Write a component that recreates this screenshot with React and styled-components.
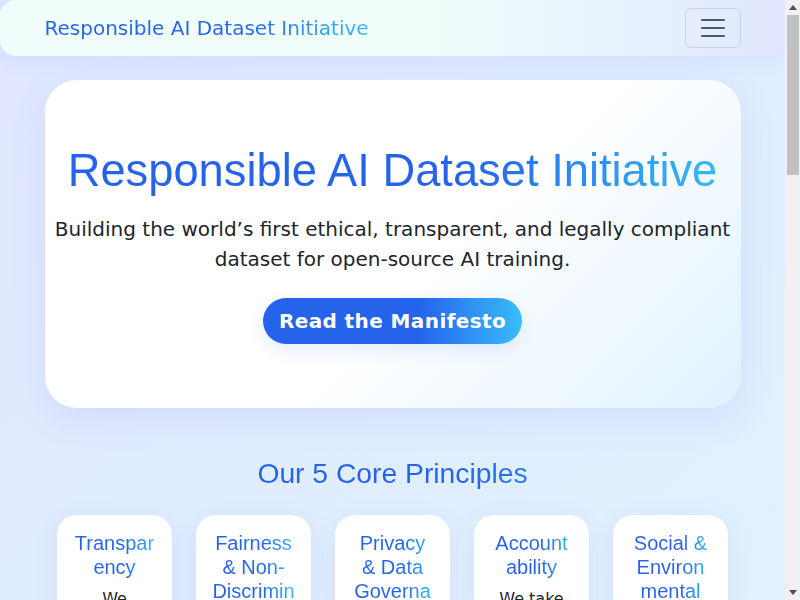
import styled, { createGlobalStyle, css } from "styled-components";

const GlobalStyle = createGlobalStyle`
  * { box-sizing: border-box; }
  html, body { margin: 0; }
  body {
    margin-right: 15px;
    font-family: "DejaVu Sans", "Noto Sans", sans-serif;
    font-size: 16px;
    line-height: 1.5;
    color: #212529;
    background: linear-gradient(135deg, #e0e7ff 0%, #e0f2fe 100%) fixed;
    min-height: 100vh;
  }
`;

// blue -> sky text used for brand, headings and cards
const gradientText = css`
  background: linear-gradient(90deg, #2563eb 60%, #38bdf8 100%);
  -webkit-background-clip: text;
  background-clip: text;
  -webkit-text-fill-color: transparent;
  color: transparent;
`;

const Container = styled.div`
  width: 100%;
  max-width: 720px;
  margin: 0 auto;
  padding: 0 12px;
`;

const Navbar = styled.nav`
  height: 56px;
  display: flex;
  align-items: center;
  border-radius: 16px;
  background: linear-gradient(90deg, #f0fdfa 55%, #e0e7ff 100%);
  box-shadow: 0 4px 18px rgba(99, 102, 241, 0.1);
`;

const NavInner = styled(Container)`
  display: flex;
  align-items: center;
  justify-content: space-between;
`;

const Brand = styled.a`
  display: inline-block;
  font-size: 20px;
  line-height: 30px;
  text-decoration: none;
  ${gradientText}
`;

const Toggler = styled.button`
  width: 56px;
  height: 40px;
  padding: 4px 12px;
  display: flex;
  align-items: center;
  justify-content: center;
  background: transparent;
  border: 1px solid rgba(0, 0, 0, 0.1);
  border-radius: 6px;
`;

const Hero = styled.section`
  margin-top: 24px;
  padding: 64px 8px;
  text-align: center;
  border-radius: 32px;
  background: linear-gradient(135deg, #ffffff 55%, #e0f2fe 100%);
  box-shadow: 0 10px 36px rgba(99, 102, 241, 0.12);
`;

const Title = styled.h1`
  margin: 0 0 16px;
  font-family: "Liberation Sans", Arial, sans-serif;
  font-size: 45.3px;
  font-weight: 300;
  line-height: 1.2;
  ${gradientText}
`;

const Lead = styled.p`
  margin: 0 0 24px;
  font-size: 20px;
  line-height: 30px;
`;

const CtaButton = styled.a`
  display: inline-block;
  padding: 8px 16px;
  font-size: 20px;
  line-height: 30px;
  font-weight: 700;
  letter-spacing: 0.4px;
  color: #fff;
  text-decoration: none;
  border-radius: 999px;
  background: linear-gradient(90deg, #2563eb 60%, #38bdf8 100%);
  box-shadow: 0 6px 18px rgba(37, 99, 235, 0.12);
`;

const Section = styled.section`
  padding-top: ${(p) => p.$top || 49}px;
`;

const SectionTitle = styled.h2`
  margin: 0 0 24px;
  text-align: center;
  font-family: "Liberation Sans", Arial, sans-serif;
  font-size: 28.27px;
  font-weight: 500;
  line-height: 1.2;
  ${gradientText}
`;

const CardRow = styled.div`
  display: flex;
  flex-wrap: wrap;
  justify-content: center;
  align-items: flex-start;
  gap: 24px;
`;

const Card = styled.div`
  width: ${(p) => p.$width || 115}px;
  padding: 16px;
  text-align: center;
  overflow-wrap: anywhere;
  background: #fff;
  border-radius: 20px;
  box-shadow: 0 6px 24px rgba(99, 102, 241, 0.1);
`;

const CardTitle = styled.h5`
  margin: 0 0 8px;
  font-family: "Liberation Sans", Arial, sans-serif;
  font-size: 20px;
  font-weight: 500;
  line-height: 1.2;
  ${gradientText}
`;

const CardText = styled.p`
  margin: 0;
`;

const Footer = styled.footer`
  margin-top: 64px;
  padding: 32px 0;
  text-align: center;
  font-size: 14px;
  color: #6c757d;
`;

// classic browser scrollbar, drawn over the right edge of the window
const Scrollbar = styled.aside`
  position: fixed;
  top: 0;
  right: 0;
  bottom: 0;
  width: 15px;
  display: flex;
  flex-direction: column;
  background: #f1f1f1;
`;

const ScrollArrow = styled.div`
  height: 15px;
  display: flex;
  align-items: center;
  justify-content: center;
`;

const ScrollThumb = styled.div`
  height: 160px;
  margin: 0 1px 0 2px;
  background: #c1c1c1;
`;

const ScrollSpace = styled.div`
  flex: 1;
`;

const principles = [
  {
    title: "Transparency",
    text: "We document every source, license and collection step so anyone can audit the data.",
  },
  {
    title: "Fairness & Non-Discrimination",
    text: "Data is reviewed for bias and balanced across languages, regions and groups.",
  },
  {
    title: "Privacy & Data Governance",
    text: "Personal data is removed or consented, and governed by clear public rules.",
  },
  {
    title: "Accountability",
    text: "We take responsibility for the dataset and answer to an open review board.",
  },
  {
    title: "Social & Environmental Wellbeing",
    text: "We weigh the social and energy costs of every release we publish.",
  },
];

const steps = [
  {
    title: "Collect",
    text: "Only openly licensed or consented material enters the pipeline, with provenance recorded.",
  },
  {
    title: "Review",
    text: "Community reviewers check samples for bias, harm and legal compliance.",
  },
  {
    title: "Release",
    text: "Each version ships with a datasheet, changelog and audit report.",
  },
];

function MenuIcon() {
  return (
    <svg width="30" height="30" viewBox="0 0 30 30" aria-hidden="true">
      <path
        d="M4 7h22M4 15h22M4 23h22"
        stroke="rgba(33,37,41,0.75)"
        strokeWidth="2"
        strokeLinecap="round"
        fill="none"
      />
    </svg>
  );
}

function Arrow({ down }) {
  return (
    <svg width="8" height="5" viewBox="0 0 8 5">
      <polygon points={down ? "0,0 8,0 4,5" : "0,5 8,5 4,0"} fill="#505050" />
    </svg>
  );
}

export default function App() {
  return (
    <>
      <GlobalStyle />
      <Navbar>
        <NavInner>
          <Brand href="#">Responsible AI Dataset Initiative</Brand>
          <Toggler aria-label="Toggle navigation">
            <MenuIcon />
          </Toggler>
        </NavInner>
      </Navbar>

      <Container>
        <Hero>
          <Title>Responsible AI Dataset Initiative</Title>
          <Lead>
            Building the world’s first ethical, transparent, and legally compliant dataset for
            open-source AI training.
          </Lead>
          <CtaButton href="#">Read the Manifesto</CtaButton>
        </Hero>

        <Section>
          <SectionTitle>Our 5 Core Principles</SectionTitle>
          <CardRow>
            {principles.map((p) => (
              <Card key={p.title}>
                <CardTitle>{p.title}</CardTitle>
                <CardText>{p.text}</CardText>
              </Card>
            ))}
          </CardRow>
        </Section>

        <Section $top={64}>
          <SectionTitle>How We Build the Dataset</SectionTitle>
          <CardRow>
            {steps.map((s) => (
              <Card key={s.title} $width={200}>
                <CardTitle>{s.title}</CardTitle>
                <CardText>{s.text}</CardText>
              </Card>
            ))}
          </CardRow>
        </Section>

        <Section $top={64}>
          <Hero>
            <SectionTitle>Join the Initiative</SectionTitle>
            <Lead>
              Researchers, lawyers, artists and engineers are welcome. Help us shape a dataset the
              whole community can trust.
            </Lead>
            <CtaButton href="#">Get Involved</CtaButton>
          </Hero>
        </Section>

        <Footer>© 2024 Responsible AI Dataset Initiative · Open data, open governance.</Footer>
      </Container>

      <Scrollbar aria-hidden="true">
        <ScrollArrow>
          <Arrow />
        </ScrollArrow>
        <ScrollThumb />
        <ScrollSpace />
        <ScrollArrow>
          <Arrow down />
        </ScrollArrow>
      </Scrollbar>
    </>
  );
}
